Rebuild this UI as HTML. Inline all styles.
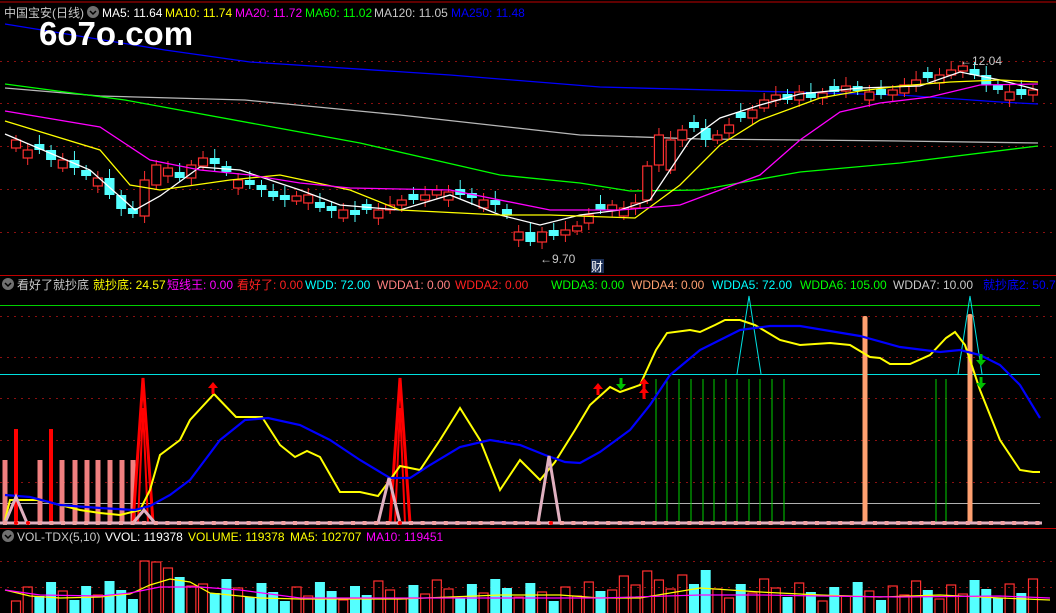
<!DOCTYPE html>
<html><head><meta charset="utf-8"><style>
html,body{margin:0;padding:0;background:#000;width:1056px;height:613px;overflow:hidden}
svg{position:absolute;left:0;top:0}
.t{font-family:"Liberation Sans","Noto Sans CJK SC",sans-serif;font-size:12px}
</style></head><body>
<svg id="s" width="1056" height="613" xmlns="http://www.w3.org/2000/svg">
<g id="grid" stroke="#8a1010" stroke-dasharray="2,5" stroke-width="1">
<line x1="0" y1="61.5" x2="1056" y2="61.5"/><line x1="0" y1="103.5" x2="1056" y2="103.5"/>
<line x1="0" y1="146.5" x2="1056" y2="146.5"/><line x1="0" y1="189.5" x2="1056" y2="189.5"/>
<line x1="0" y1="232.5" x2="1056" y2="232.5"/>
<line x1="0" y1="316.5" x2="1056" y2="316.5"/><line x1="0" y1="357.5" x2="1056" y2="357.5"/>
<line x1="0" y1="398.5" x2="1056" y2="398.5"/><line x1="0" y1="440.5" x2="1056" y2="440.5"/>
<line x1="0" y1="482.5" x2="1056" y2="482.5"/>
<line x1="0" y1="561.5" x2="1056" y2="561.5"/><line x1="0" y1="587.5" x2="1056" y2="587.5"/>
</g>
<line x1="0" y1="2" x2="1056" y2="2" stroke="#c00000"/>
<line x1="0" y1="275.5" x2="1056" y2="275.5" stroke="#c00000"/>
<line x1="0" y1="528.5" x2="1056" y2="528.5" stroke="#c00000"/>
<line x1="0" y1="305.5" x2="1040" y2="305.5" stroke="#00d000"/>
<line x1="0" y1="374.5" x2="1040" y2="374.5" stroke="#00e0e0"/>
<line x1="0" y1="503.5" x2="1040" y2="503.5" stroke="#b0b0b0"/>
<g id="dyn"></g>
<text class="t" x="4" y="17" fill="#c8c8c8">中国宝安(日线)</text>
<circle cx="93" cy="12" r="6" fill="#707070"/><path d="M90 11 l3 3 l3 -3" stroke="#000" fill="none" stroke-width="1.5"/>
<text class="t" x="102" y="17" fill="#fff">MA5: 11.64</text>
<text class="t" x="165" y="17" fill="#ffff00">MA10: 11.74</text>
<text class="t" x="235" y="17" fill="#ff00ff">MA20: 11.72</text>
<text class="t" x="305" y="17" fill="#00ff00">MA60: 11.02</text>
<text class="t" x="374" y="17" fill="#c8c8c8">MA120: 11.05</text>
<text class="t" x="451" y="17" fill="#0000ff">MA250: 11.48</text>
<text x="39" y="45" fill="#fff" style="font-family:'Liberation Sans',sans-serif;font-size:33px;font-weight:bold">6o7o.com</text>
<text class="t" x="540" y="263" fill="#c8c8c8">←9.70</text>
<text class="t" x="960" y="65" fill="#c8c8c8">←12.04</text>
<rect x="591" y="259" width="13" height="14" fill="#1c2f55"/><text class="t" x="591" y="271" fill="#fff">财</text>
<circle cx="8" cy="284" r="6" fill="#707070"/><path d="M5 283 l3 3 l3 -3" stroke="#000" fill="none" stroke-width="1.5"/>
<text class="t" x="17" y="289" fill="#c8c8c8">看好了就抄底</text>
<text class="t" x="93" y="289" fill="#ffff00">就抄底: 24.57</text>
<text class="t" x="167" y="289" fill="#ff00ff">短线王: 0.00</text>
<text class="t" x="237" y="289" fill="#ff2020">看好了: 0.00</text>
<text class="t" x="305" y="289" fill="#00ffff">WDD: 72.00</text>
<text class="t" x="377" y="289" fill="#ff8080">WDDA1: 0.00</text>
<text class="t" x="455" y="289" fill="#ff2020">WDDA2: 0.00</text>
<text class="t" x="551" y="289" fill="#00ff00">WDDA3: 0.00</text>
<text class="t" x="631" y="289" fill="#ffa070">WDDA4: 0.00</text>
<text class="t" x="712" y="289" fill="#00ffff">WDDA5: 72.00</text>
<text class="t" x="800" y="289" fill="#00ff00">WDDA6: 105.00</text>
<text class="t" x="893" y="289" fill="#c8c8c8">WDDA7: 10.00</text>
<text class="t" x="983" y="289" fill="#0000ff">就抄底2: 50.7</text>
<circle cx="8" cy="536" r="6" fill="#707070"/><path d="M5 535 l3 3 l3 -3" stroke="#000" fill="none" stroke-width="1.5"/>
<text class="t" x="17" y="541" fill="#c8c8c8">VOL-TDX(5,10)</text>
<text class="t" x="105" y="541" fill="#fff">VVOL: 119378</text>
<text class="t" x="188" y="541" fill="#ffff00">VOLUME: 119378</text>
<text class="t" x="290" y="541" fill="#ffff00">MA5: 102707</text>
<text class="t" x="366" y="541" fill="#ff00ff">MA10: 119451</text>
</svg>
<script>
(function(){
var NS="http://www.w3.org/2000/svg",g=document.getElementById('dyn');
function el(t,a){var e=document.createElementNS(NS,t);for(var k in a)e.setAttribute(k,a[k]);g.appendChild(e);return e;}
function pl(pts,c,w){el('polyline',{points:pts.map(function(p){return p.join(',');}).join(' '),fill:'none',stroke:c,'stroke-width':w||1.3});}
var C=[140,150,150,160,160,168,176,178,195,209,214,185,165,168,178,165,158,164,172,180,185,190,197,200,198,195,208,212,210,215,210,210,205,200,200,195,190,192,195,198,200,205,215,232,242,232,236,232,228,215,210,205,208,205,200,170,140,130,128,140,135,125,118,110,100,95,100,92,98,95,92,88,90,92,95,92,85,80,78,75,70,68,75,85,90,92,95,92];
var OV={11:[180,216,1],54:[166,200,1],55:[135,165,1]};
var N=C.length,dx=(1033-16)/(N-1);
pl([[5,24],[165,50],[250,62],[450,75],[600,87],[750,91],[900,95],[1000,102],[1038,104]],'#0000ff');
pl([[5,88],[100,96],[245,100],[400,115],[580,135],[700,139],[900,141],[1038,143]],'#b8b8b8');
pl([[5,84],[125,100],[360,143],[500,175],[580,183],[630,191],[700,190],[800,172],[900,163],[1038,146]],'#00ff00');
var o=C[0]+8;
for(var i=0;i<N;i++){var cx=16+i*dx,c=C[i];var op=(i%3==1)?c+8:o; if(i%4==2) op=c-6;
 var up=c<op,tp=Math.min(c,op),bt=Math.max(c,op); if(bt-tp<5){tp-=2;bt=tp+5;}
 if(OV[i]){tp=OV[i][0];bt=OV[i][1];up=true;}
 var col=up?'#ff3030':'#54ffff';
 el('line',{x1:cx,y1:tp-5-(i%3)*2,x2:cx,y2:bt+4+(i%2)*3,stroke:col,'stroke-width':1});
 if(up)el('rect',{x:cx-4.5,y:tp,width:9,height:bt-tp,fill:'#000',stroke:col,'stroke-width':1.2});
 else el('rect',{x:cx-5,y:tp,width:10,height:bt-tp,fill:col});
 var h=12+((i*37)%23)+(i>10&&i<16?12:0)+(i>50&&i<60?10:0)+(i==12?20:0);
 if(i==11)h=52;
 var vt=613-h; if(up)el('rect',{x:cx-4.5,y:vt,width:9,height:h+2,fill:'none',stroke:'#ff3030','stroke-width':1.2});
 else el('rect',{x:cx-5,y:vt,width:10,height:h,fill:'#54ffff'});
 o=c;}
pl([[5,134],[90,170],[135,210],[160,196],[200,167],[240,170],[300,190],[340,205],[400,210],[450,195],[500,215],[540,225],[580,215],[620,210],[650,200],[690,140],[720,118],[760,105],[800,94],[860,88],[920,86],[960,72],[1000,80],[1038,90]],'#fff');
pl([[5,121],[100,150],[130,185],[160,190],[230,180],[280,175],[350,190],[400,210],[500,215],[550,215],[635,218],[680,185],[720,145],[760,120],[820,98],[860,91],[900,86],[950,82],[1000,80],[1038,82]],'#ffff00');
pl([[5,111],[100,127],[150,160],[200,170],[250,175],[300,183],[350,188],[450,190],[550,210],[620,210],[680,205],[720,190],[760,175],[800,140],[840,112],[880,103],[930,97],[980,85],[1038,84]],'#ff00ff');
pl([[5,590],[30,596],[60,598],[100,597],[130,594],[150,585],[170,579],[190,582],[210,593],[260,598],[300,599],[400,599],[500,595],[560,595],[600,598],[640,598],[700,588],[760,592],[820,595],[880,597],[940,595],[1000,598],[1050,600]],'#ffff00',1.2);
pl([[5,590],[40,595],[100,596],[130,593],[160,587],[200,587],[240,590],[300,598],[400,598],[500,598],[600,598],[700,595],[760,595],[820,596],[900,597],[1000,596],[1050,598]],'#ff00ff',1.2);
[5,40,62,75,87,98,110,122,133].forEach(function(x){el('rect',{x:x-2.5,y:460,width:5,height:63,fill:'#f08080'});});
[16,51].forEach(function(x){el('rect',{x:x-2,y:429,width:4,height:94,fill:'#ff0000'});});
[656,667,679,691,703,714,726,737,749,760,772,784,936,946].forEach(function(x){el('line',{x1:x,y1:379,x2:x,y2:523,stroke:'#00d000'});});
[[143,378],[400,378]].forEach(function(p){el('polyline',{points:(p[0]-10)+',523 '+p[0]+','+p[1]+' '+(p[0]+10)+',523',fill:'none',stroke:'#ff0000','stroke-width':3});el('polyline',{points:(p[0]-5)+',523 '+p[0]+','+(p[1]+30)+' '+(p[0]+5)+',523',fill:'none',stroke:'#ff0000','stroke-width':2});});
[[749,296],[970,296]].forEach(function(p){el('polyline',{points:(p[0]-12)+',374 '+p[0]+','+p[1]+' '+(p[0]+12)+',374',fill:'none',stroke:'#00e0e0','stroke-width':1});});
[[865,316],[970,314]].forEach(function(p){el('rect',{x:p[0]-2.5,y:p[1],width:5,height:523-p[1],fill:'#ffa070',rx:2});});
pl([[5,520],[10,500],[40,500],[60,505],[80,510],[100,513],[120,515],[140,510],[150,490],[160,455],[180,440],[190,420],[214,394],[236,417],[262,417],[280,445],[295,457],[307,451],[320,457],[340,492],[360,492],[378,496],[390,480],[400,466],[420,470],[440,440],[460,408],[480,440],[500,490],[520,460],[540,480],[555,462],[575,430],[590,405],[610,387],[620,392],[640,385],[656,350],[667,333],[690,330],[700,332],[715,325],[725,320],[740,320],[755,325],[780,340],[800,345],[830,343],[850,345],[870,357],[880,358],[890,364],[910,364],[930,355],[946,338],[955,332],[965,345],[975,375],[980,390],[1000,440],[1020,470],[1033,472],[1040,472]],'#ffff00',2);
pl([[5,495],[30,497],[60,505],[100,508],[135,510],[150,506],[170,495],[190,480],[220,440],[245,420],[268,418],[300,425],[330,440],[360,460],[390,478],[410,478],[430,465],[460,447],[490,440],[520,445],[545,455],[565,462],[580,463],[600,452],[630,430],[650,405],[670,375],[700,350],[740,330],[770,326],[800,326],[860,336],[900,347],[940,352],[960,350],[980,355],[1000,365],[1020,385],[1040,418]],'#0000ff',2.2);
[[16,497],[144,510],[389,478],[549,456]].forEach(function(p){el('polyline',{points:(p[0]-11)+',523 '+p[0]+','+p[1]+' '+(p[0]+11)+',523',fill:'none',stroke:'#e0b0c0','stroke-width':3});});
el('line',{x1:0,y1:523,x2:1042,y2:523,stroke:'#e0b0c0','stroke-width':3});
for(var xx=5;xx<1042;xx+=11.6)el('rect',{x:xx-2,y:521,width:4,height:4,fill:'#f0a0a0'});
[16,28,400,551].forEach(function(x){el('circle',{cx:x,cy:523,r:2,fill:'#ff0000'});});
function arr(x,y,up,c){if(up)el('path',{d:'M'+x+' '+(y-6)+' l-5 6 h3.5 v6 h3 v-6 h3.5 z',fill:c});else el('path',{d:'M'+x+' '+(y+6)+' l-5 -6 h3.5 v-6 h3 v6 h3.5 z',fill:c});}
arr(213,388,1,'#ff0000');arr(598,389,1,'#ff0000');arr(644,384,1,'#ff0000');arr(644,393,1,'#ff0000');
arr(621,384,0,'#00c000');arr(981,360,0,'#00c000');arr(981,383,0,'#00c000');
})();
</script>
</body></html>
